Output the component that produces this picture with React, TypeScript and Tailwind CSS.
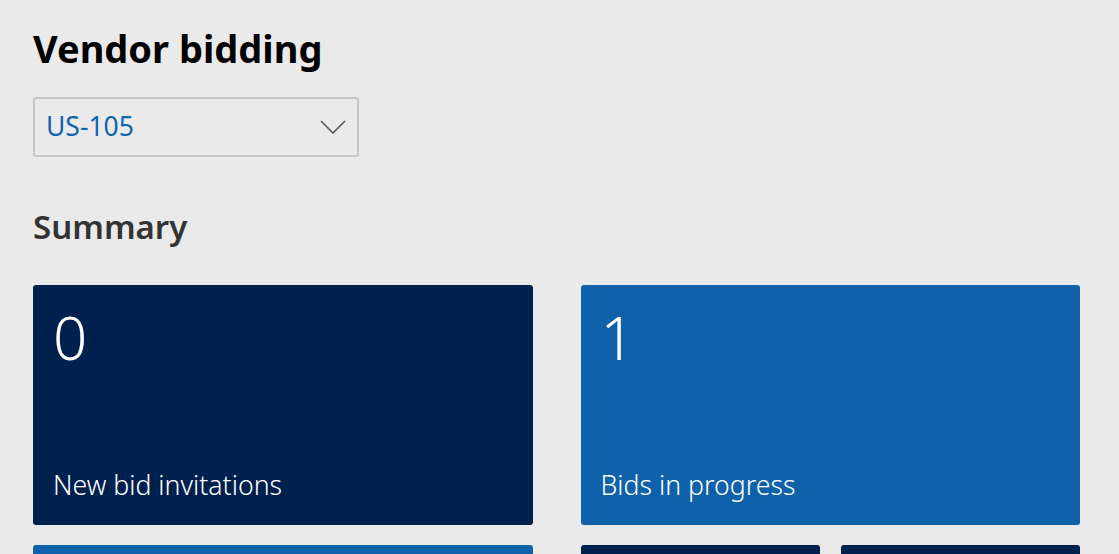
const Tile = ({ count, label, color }: { count?: string; label?: string; color: string }) => {
  return (
    <div className={`${color} rounded-[3px] h-[240px] flex flex-col justify-between px-5 pt-[16px] pb-[22px] text-white`}>
      <div className="text-[60px] leading-[72px] font-light">{count}</div>
      <div className="text-[26.7px] leading-[36px] font-light">{label}</div>
    </div>
  )
}

const App = () => {
  return (
    <div
      className="min-h-screen bg-[#eaeaea] pl-[33px] pr-[39px] pt-[24px]"
      style={{ fontFamily: '"Noto Sans", "Open Sans", sans-serif' }}
    >
      {/* heading and site selector */}
      <h1 className="text-[38px] leading-[48px] font-bold text-black">Vendor bidding</h1>

      <div className="mt-[25px] w-[326px] h-[60px] border-2 border-[#c6c6c6] rounded-[3px] flex items-center justify-between pl-[11px] pr-[10px]">
        <span className="text-[26.5px] text-[#1064ac]">US-105</span>
        <svg width="26" height="14" viewBox="0 0 26 14" className="mr-[1px]">
          <polyline points="1,1 13,13 25,1" fill="none" stroke="#5a5a5a" strokeWidth="1.6" />
        </svg>
      </div>

      <h2 className="mt-[48px] text-[33px] leading-[44px] font-semibold text-[#333]">Summary</h2>

      {/* summary tiles */}
      <div className="mt-[36px] grid grid-cols-2 gap-x-[48px] gap-y-[20px]">
        <Tile count="0" label="New bid invitations" color="bg-[#00204e]" />
        <Tile count="1" label="Bids in progress" color="bg-[#0f62aa]" />
        <Tile color="bg-[#0f62aa]" />
        <div className="grid grid-cols-2 gap-[21px]">
          <Tile color="bg-[#00204e]" />
          <Tile color="bg-[#00204e]" />
        </div>
      </div>
    </div>
  )
}

export default App
